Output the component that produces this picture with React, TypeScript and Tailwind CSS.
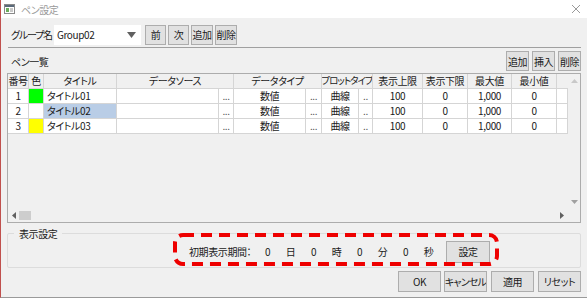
import React from "react";

const font = "font-['Noto_Sans_CJK_JP','Noto_Sans',sans-serif] [font-feature-settings:'palt'] tracking-[-0.4px] whitespace-nowrap";

type Row = { no: number; color: string; title: string; selected?: boolean };

const rows: Row[] = [
  { no: 1, color: "bg-[#00ff00]", title: "タイトル01" },
  { no: 2, color: "bg-white", title: "タイトル02", selected: true },
  { no: 3, color: "bg-[#ffff00]", title: "タイトル03" },
];

function Btn({ label, className = "" }: { label: string; className?: string }) {
  return (
    <div
      className={`flex shrink-0 items-center justify-center overflow-hidden border border-[#adadad] bg-[#e1e1e1] text-[10px] text-[#1a1a1a] ${className}`}
    >
      {label}
    </div>
  );
}

function Head({ w, label, last, tight }: { w: string; label?: string; last?: boolean; tight?: boolean }) {
  return (
    <div
      className={`${w} flex h-[15px] shrink-0 items-center justify-center overflow-hidden ${last ? "" : "border-r"} border-b border-[#d5d5d5] bg-[#f0f0f0] leading-none ${tight ? "text-[9.5px] tracking-[-1px]" : "text-[10px]"}`}
    >
      {label}
    </div>
  );
}

function Cell({
  w,
  children,
  className = "",
}: {
  w: string;
  children?: React.ReactNode;
  className?: string;
}) {
  return (
    <div
      className={`${w} flex h-[15px] shrink-0 items-center overflow-hidden border-r border-b border-[#d5d5d5] text-[10px] leading-none ${className}`}
    >
      {children}
    </div>
  );
}

function Dots({ w, text = "..." }: { w: string; text?: string }) {
  return (
    <Cell w={w} className="items-end justify-center bg-white pb-[2px] text-[9px] text-[#555]">
      {text}
    </Cell>
  );
}

export default function App() {
  return (
    <div className={`relative flex h-[298px] w-[587px] flex-col overflow-hidden border-l border-l-[#c0504d] border-b border-b-[#9a9a9a] bg-[#f0f0f0] text-[#1a1a1a] ${font}`}>
      {/* title bar */}
      <div className="flex h-[18px] shrink-0 items-center bg-white pl-[3px] pr-[6px]">
        <svg width="11" height="10" viewBox="0 0 11 10">
          <rect x="0.5" y="0.5" width="10" height="9" fill="#ffffff" stroke="#8a8a8a" />
          <rect x="1" y="1" width="9" height="2" fill="#5a6a7a" />
          <rect x="2" y="4" width="3" height="4" fill="#6cae5c" />
          <rect x="6" y="4" width="3" height="4" fill="#c9c9c9" />
        </svg>
        <span className="ml-[6px] text-[10px] text-[#9a9a9a]">ペン設定</span>
        <svg className="ml-auto" width="10" height="10" viewBox="0 0 10 10">
          <path d="M1 1L9 9M9 1L1 9" stroke="#9a9a9a" strokeWidth="1" />
        </svg>
      </div>

      <div className="flex flex-1 flex-col px-[6px]">
        {/* group row */}
        <div className="mt-[6px] flex h-[21px] items-center">
          <span className="ml-[4px] w-[43px] shrink-0 overflow-hidden text-[10px] tracking-[-1.2px]">グループ名</span>
          <div className="flex h-[20px] w-[87px] shrink-0 items-center bg-white pl-[3px] pr-[5px] text-[10px]">
            <span>Group02</span>
            <svg className="ml-auto" width="9" height="6" viewBox="0 0 9 6">
              <path d="M0 0H9L4.5 6Z" fill="#606060" />
            </svg>
          </div>
          <Btn label="前" className="ml-[4px] h-[20px] w-[21px]" />
          <Btn label="次" className="ml-[2px] h-[20px] w-[21px]" />
          <Btn label="追加" className="ml-[2px] h-[20px] w-[22px]" />
          <Btn label="削除" className="ml-[2px] h-[20px] w-[22px]" />
        </div>

        <div className="mt-[2px] ml-[1px] h-px bg-[#a0a0a0]" />

        {/* pen list header */}
        <div className="mt-[3px] flex h-[20px] items-center">
          <span className="ml-[4px] text-[10px]">ペン一覧</span>
          <Btn label="追加" className="ml-auto h-[20px] w-[23px]" />
          <Btn label="挿入" className="ml-[3px] h-[20px] w-[23px]" />
          <Btn label="削除" className="ml-[3px] h-[20px] w-[23px]" />
        </div>

        {/* table */}
        <div className="mt-[2px] flex h-[150px] flex-col border border-[#acacac]">
          <div className="flex min-h-0 flex-1">
            <div className="flex flex-1 flex-col">
              <div className="flex">
                <Head w="w-[21px]" label="番号" />
                <Head w="w-[15px]" label="色" />
                <Head w="w-[73px]" label="タイトル" />
                <Head w="w-[117px]" label="データソース" />
                <Head w="w-[88px]" label="データタイプ" />
                <Head w="w-[51px]" label="プロットタイプ" tight />
                <Head w="w-[50px]" label="表示上限" />
                <Head w="w-[45px]" label="表示下限" />
                <Head w="w-[44px]" label="最大値" />
                <Head w="w-[45px]" label="最小値" />
                <Head w="w-[11px]" last />
              </div>
              {rows.map((r) => (
                <div key={r.no} className="flex">
                  <Cell w="w-[21px]" className="justify-center bg-white">{r.no}</Cell>
                  <Cell w="w-[15px]" className={r.color} />
                  <Cell w="w-[73px]" className={`pl-[3px] ${r.selected ? "bg-[#b9cde6]" : "bg-white"}`}>
                    {r.title}
                  </Cell>
                  <Cell w="w-[102px]" className="bg-white" />
                  <Dots w="w-[15px]" />
                  <Cell w="w-[72px]" className="justify-center bg-white">数値</Cell>
                  <Dots w="w-[16px]" />
                  <Cell w="w-[37px]" className="justify-center bg-white">曲線</Cell>
                  <Dots w="w-[14px]" text=".." />
                  <Cell w="w-[50px]" className="justify-center bg-white">100</Cell>
                  <Cell w="w-[45px]" className="justify-center bg-white">0</Cell>
                  <Cell w="w-[44px]" className="justify-center bg-white">1,000</Cell>
                  <Cell w="w-[45px]" className="justify-center bg-white">0</Cell>
                  <Cell w="w-[11px]" className="bg-white" />
                </div>
              ))}
            </div>
            {/* vertical scrollbar */}
            <div className="flex w-[13px] flex-col items-center justify-between bg-[#f0f0f0] py-[5px]">
              <svg width="7" height="4" viewBox="0 0 7 4">
                <path d="M0 4H7L3.5 0Z" fill="#c8c8c8" />
              </svg>
              <svg width="7" height="4" viewBox="0 0 7 4">
                <path d="M0 0H7L3.5 4Z" fill="#a0a0a0" />
              </svg>
            </div>
          </div>
          {/* horizontal scrollbar */}
          <div className="flex h-[13px] shrink-0">
            <div className="flex flex-1 items-center bg-[#f0f0f0] pl-[4px] pr-[3px]">
              <svg width="4" height="7" viewBox="0 0 4 7">
                <path d="M4 0V7L0 3.5Z" fill="#606060" />
              </svg>
              <div className="ml-[3px] h-[9px] w-[12px] bg-[#cdcdcd]" />
              <svg className="ml-auto" width="4" height="7" viewBox="0 0 4 7">
                <path d="M0 0V7L4 3.5Z" fill="#606060" />
              </svg>
            </div>
            <div className="w-[13px] bg-[#f0f0f0]" />
          </div>
        </div>

        {/* display settings group */}
        <div className="relative mt-[10px] flex h-[35px] items-center rounded-[2px] border border-[#dcdcdc]">
          <span className="absolute -top-[8px] left-[6px] bg-[#f0f0f0] px-[5px] text-[10px]">表示設定</span>
          <div className="mt-[2px] flex items-center pl-[181px] text-[10px]">
            <span className="w-[67px]">初期表示期間：</span>
            {["0", "日", "0", "時", "0", "分", "0", "秒"].map((t, i) => (
              <span key={i} className="w-[23px] text-center">{t}</span>
            ))}
            <Btn label="設定" className="ml-[6px] h-[22px] w-[44px]" />
          </div>
        </div>

        {/* dialog buttons */}
        <div className="mt-[3px] flex justify-end">
          <Btn label="OK" className="h-[21px] w-[43px]" />
          <Btn label="キャンセル" className="ml-[3px] h-[21px] w-[43px] tracking-[-0.8px]" />
          <Btn label="適用" className="ml-[4px] h-[21px] w-[43px]" />
          <Btn label="リセット" className="ml-[4px] h-[21px] w-[43px]" />
        </div>
      </div>

      {/* red annotation */}
      <svg className="pointer-events-none absolute left-[172px] top-[233px]" width="328" height="34" viewBox="0 0 328 34">
        <rect
          x="2"
          y="2"
          width="322"
          height="29"
          rx="8"
          fill="none"
          stroke="#ee0000"
          strokeWidth="4"
          strokeDasharray="11 7"
        />
      </svg>
    </div>
  );
}
